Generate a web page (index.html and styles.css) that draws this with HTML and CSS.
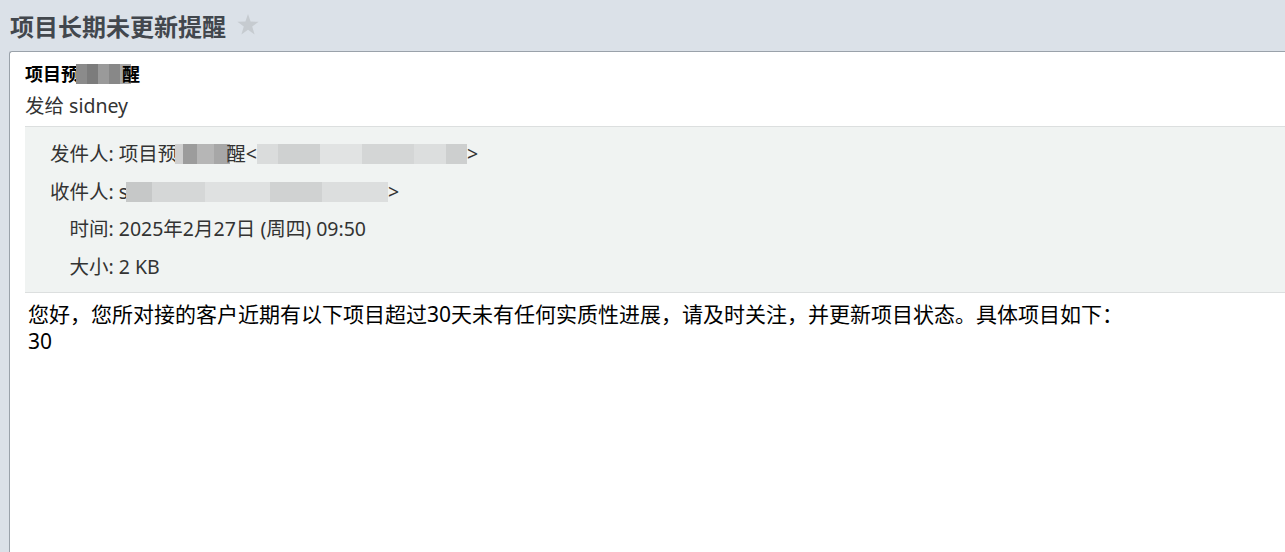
FILE: index.html
```html
<!DOCTYPE html>
<html lang="zh-CN">
<head>
    <meta charset="UTF-8">
    <meta name="viewport" content="width=device-width, initial-scale=1.0">
    <title>项目长期未更新提醒</title>
    <link rel="stylesheet" href="styles.css">
</head>
<body>
    <div class="titulo">
        <h1>项目长期未更新提醒</h1>
        <svg class="estrella" width="22" height="21" viewBox="0 0 22 21">
            <polygon points="11,0 13.6,7.6 21.6,7.7 15.2,12.6 17.6,20.4 11,15.7 4.4,20.4 6.8,12.6 0.4,7.7 8.4,7.6" fill="#c6cbd0"/>
        </svg>
    </div>

    <div class="correo">
        <div class="asunto">项目预<span class="mosaico m1"></span>醒</div>
        <div class="para">发给 sidney</div>

        <div class="cabecera">
            <div class="etiqueta">发件人:</div>
            <div class="valor">项目预<span class="mosaico m2"></span>醒&lt;<span class="mosaico m3"></span>&gt;</div>
            <div class="etiqueta">收件人:</div>
            <div class="valor">s<span class="mosaico m4"></span>&gt;</div>
            <div class="etiqueta">时间:</div>
            <div class="valor">2025年2月27日 (周四) 09:50</div>
            <div class="etiqueta">大小:</div>
            <div class="valor">2 KB</div>
        </div>

        <div class="contenido">
            <p>您好，您所对接的客户近期有以下项目超过30天未有任何实质性进展，请及时关注，并更新项目状态。具体项目如下：</p>
            <p>30</p>
        </div>
    </div>
</body>
</html>
```

FILE: styles.css
```css
html, body {
    margin: 0;
    height: 100%;
}
body {
    background: #dbe1e8;
    font-family: "Noto Sans", "Noto Sans CJK SC", sans-serif;
    display: flex;
    flex-direction: column;
    overflow: hidden;
}
.titulo {
    display: flex;
    align-items: center;
    height: 51px;
    padding-left: 10px;
}
.titulo h1 {
    margin: 0;
    font-family: "Noto Sans CJK SC", sans-serif;
    font-size: 24px;
    font-weight: bold;
    color: #42474d;
    line-height: 1;
}
.estrella {
    margin-left: 11px;
    margin-top: -2px;
}
.correo {
    flex: 1;
    margin-left: 9px;
    background: white;
    border-top: 1px solid #9aa2aa;
    border-left: 1px solid #9aa2aa;
    border-top-left-radius: 3px;
    padding-left: 15px;
}
.asunto {
    margin-top: 10px;
    font-size: 18px;
    font-weight: bold;
    color: #000;
    line-height: 24px;
    display: flex;
    align-items: center;
}
.para {
    margin-top: 7px;
    font-size: 19.5px;
    color: #333;
    line-height: 26px;
}
.cabecera {
    margin-top: 7px;
    background: #f0f3f2;
    border-top: 1px solid #dcdfdf;
    border-bottom: 1px solid #dcdfdf;
    padding: 8px 0 6px 25px;
    display: grid;
    grid-template-columns: auto 1fr;
    column-gap: 5px;
    font-size: 19.5px;
    color: #333;
}
.etiqueta {
    text-align: right;
    line-height: 37.7px;
}
.valor {
    line-height: 37.7px;
    display: flex;
    align-items: center;
}
.contenido {
    padding: 8px 0 0 3px;
    font-size: 21px;
    color: #000;
}
.contenido p {
    margin: 0;
    line-height: 27px;
}
/* bloques pixelados en lugar del texto oculto */
.mosaico {
    display: inline-block;
    height: 20px;
}
.m1 {
    width: 55px;
    margin-left: -3px;
    margin-right: -9px;
    background: linear-gradient(90deg, #8b8b8b 0 20%, #7c7c7c 20% 40%, #9a9a9a 40% 60%, #888 60% 80%, #a8a8a8 80%);
}
.m2 {
    width: 55px;
    margin-left: -2px;
    margin-right: -4px;
    background: linear-gradient(90deg, #cfcfcf 0 15%, #9c9c9c 15% 40%, #b6b6b6 40% 70%, #a7a7a7 70%);
}
.m3 {
    width: 210px;
    background: linear-gradient(90deg, #dadcdc 0 10%, #cfd1d1 10% 30%, #e1e3e3 30% 50%, #d4d6d6 50% 75%, #dcdede 75% 90%, #cdcfcf 90%);
}
.m4 {
    width: 262px;
    margin-left: -2px;
    background: linear-gradient(90deg, #c6c8c8 0 10%, #d5d7d7 10% 30%, #dfe1e1 30% 55%, #d0d2d2 55% 75%, #dcdede 75%);
}
```
